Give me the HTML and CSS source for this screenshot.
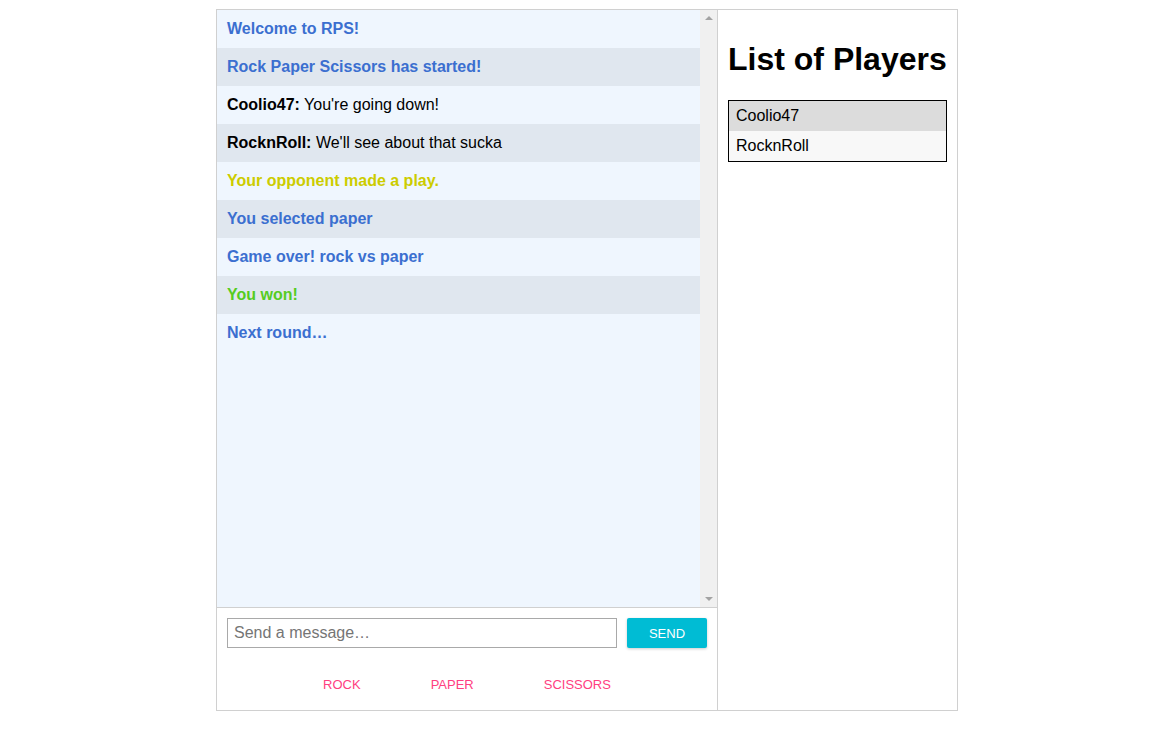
FILE: index.html
```
<!DOCTYPE html>
<html lang="en">
<head>
    <meta charset="UTF-8">
    <meta name="viewport" content="width=device-width, initial-scale=1.0">
    <title>RPS</title>
    <link rel="stylesheet" href="styles.css">
</head>
<body>
    <div id="game">
        <div id="chatPanel">
            <div id="chatBox">
                <ul id="messages">
                    <li class="info">Welcome to RPS!</li>
                    <li class="info">Rock Paper Scissors has started!</li>
                    <li><b>Coolio47:</b> You're going down!</li>
                    <li><b>RocknRoll:</b> We'll see about that sucka</li>
                    <li class="warn">Your opponent made a play.</li>
                    <li class="info">You selected paper</li>
                    <li class="info">Game over! rock vs paper</li>
                    <li class="win">You won!</li>
                    <li class="info">Next round…</li>
                </ul>
                <div class="scrollbar">
                    <span class="arrow up"></span>
                    <span class="arrow down"></span>
                </div>
            </div>
            <div id="chatFooter">
                <form id="sendForm">
                    <input id="msg" placeholder="Send a message…" autocomplete="off"/>
                    <button type="button" id="sendBtn">SEND</button>
                </form>
                <div id="plays">
                    <button type="button" class="play">ROCK</button>
                    <button type="button" class="play">PAPER</button>
                    <button type="button" class="play">SCISSORS</button>
                </div>
            </div>
        </div>
        <div id="playersPanel">
            <h1>List of Players</h1>
            <ul id="players">
                <li>Coolio47</li>
                <li>RocknRoll</li>
            </ul>
        </div>
    </div>
</body>
</html>
```
FILE: styles.css
```
body{
    margin:8px;
    font-family:"Liberation Sans", Arial, sans-serif;
    background-color:white;
}
#game{
    display:flex;
    width:740px;
    height:700px;
    margin:1px 0 0 calc(50% - 367px);
    border:1px solid #d0d0d0;
}
#chatPanel{
    width:500px;
    display:flex;
    flex-direction:column;
    border-right:1px solid #d0d0d0;
}
#chatBox{
    display:flex;
    flex-shrink:0;
    height:597px;
    background-color:#eff6fe;
    border-bottom:1px solid #d0d0d0;
}
#messages{
    flex:1;
    list-style:none;
    margin:0;
    padding:0;
}
#messages li{
    padding:10px;
    line-height:18px;
    font-size:16px;
    color:black;
}
#messages li:nth-child(even){
    background-color:#e0e7ef;
}
#messages .info{
    color:#3b6fd0;
    font-weight:bold;
}
#messages .warn{
    color:#cccc00;
    font-weight:bold;
}
#messages .win{
    color:#55cc22;
    font-weight:bold;
}
.scrollbar{
    width:17px;
    background-color:#f0f0f0;
    display:flex;
    flex-direction:column;
    justify-content:space-between;
    align-items:center;
    padding:6px 0;
}
.arrow{
    width:0;
    height:0;
    border-left:4px solid transparent;
    border-right:4px solid transparent;
}
.up{
    border-bottom:4px solid #a3a3a3;
}
.down{
    border-top:4px solid #a3a3a3;
}
#chatFooter{
    padding:10px 10px 0;
}
#sendForm{
    display:flex;
    gap:10px;
    margin:0;
}
#msg{
    width:390px;
    height:30px;
    box-sizing:border-box;
    border:1px solid #a9a9a9;
    padding:0 6px;
    font-family:inherit;
    font-size:16px;
    color:#333;
}
#msg::placeholder{
    color:#757575;
}
#sendBtn{
    width:80px;
    height:30px;
    border:none;
    border-radius:2px;
    background-color:#00bcd4;
    color:white;
    font-family:inherit;
    font-size:13px;
    box-shadow:0 1px 3px rgba(0,0,0,0.2);
}
#plays{
    display:flex;
    justify-content:center;
    gap:38px;
    margin-top:18px;
}
.play{
    height:36px;
    padding:0 16px;
    border:none;
    background:none;
    color:#ff4081;
    font-family:inherit;
    font-size:13px;
}
#playersPanel{
    width:220px;
    padding:10px;
}
#playersPanel h1{
    font-size:32px;
    margin:21.44px 0;
    white-space:nowrap;
}
#players{
    list-style:none;
    margin:0;
    padding:0;
    border:1px solid black;
}
#players li{
    height:30px;
    line-height:30px;
    padding-left:7px;
    font-size:16px;
    background-color:#f8f8f8;
}
#players li:first-child{
    background-color:#dcdcdc;
}
```
